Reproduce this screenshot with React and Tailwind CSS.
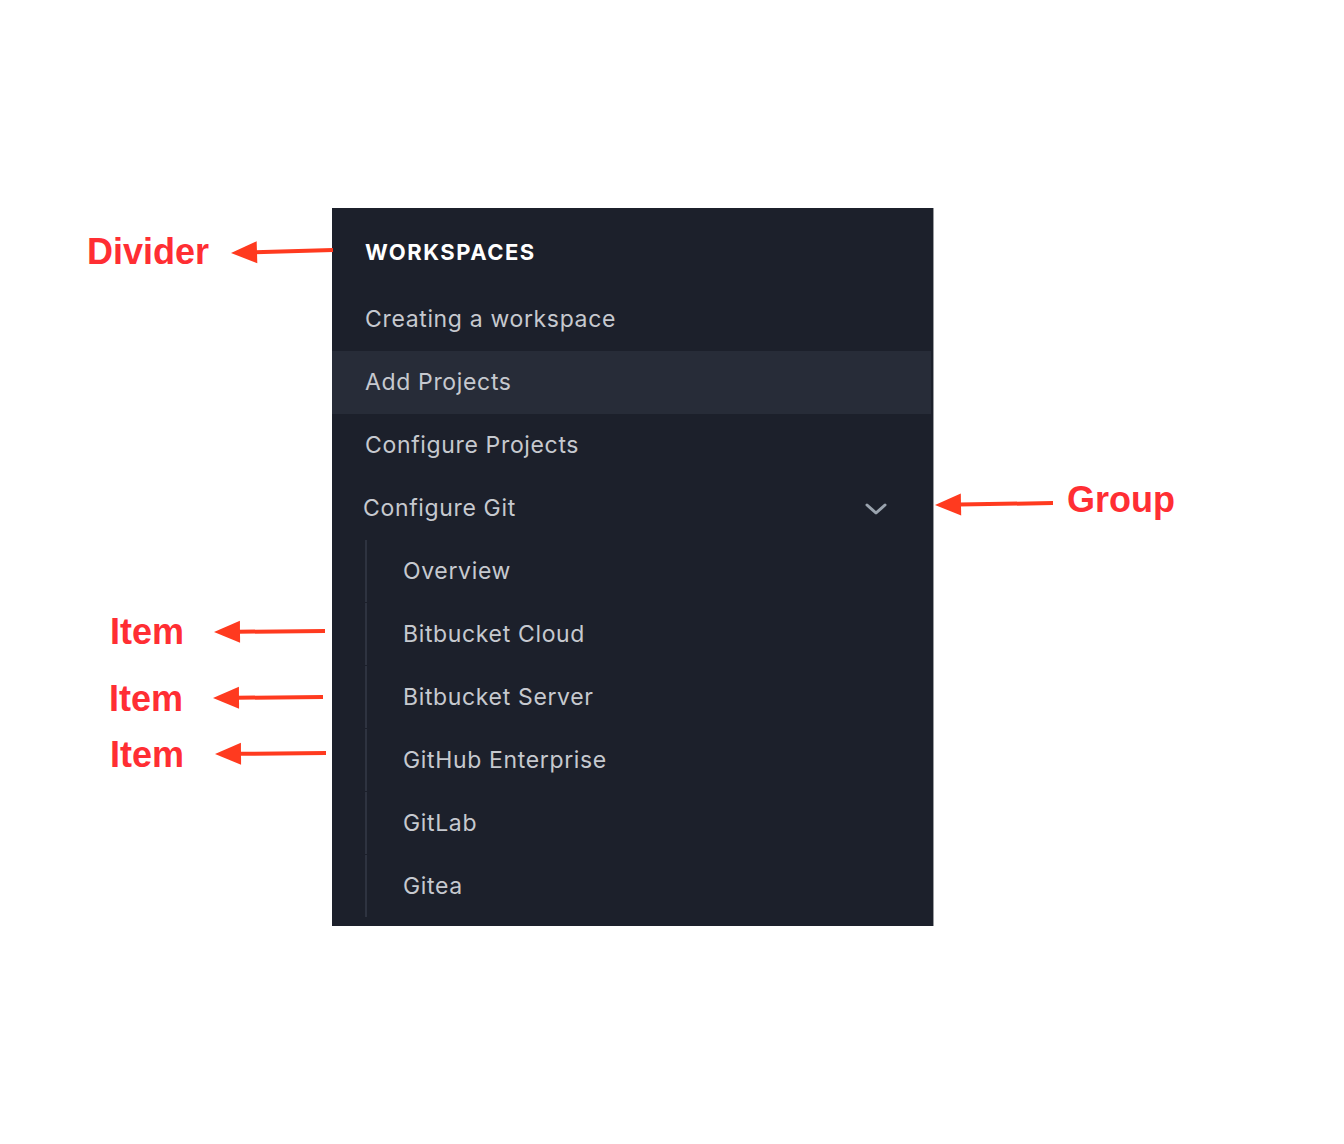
import React from "react";

const font = { fontFamily: "Inter, 'Noto Sans', sans-serif" };
const labelFont = { fontFamily: "'Liberation Sans', Arial, sans-serif" };

function Row({ children, active }) {
  return (
    <div
      className={`h-[63px] flex items-center pl-[33px] text-[23px] tracking-[0.65px] text-[#c6c9cf] ${
        active ? "bg-[#272c38] mr-[2px]" : ""
      }`}
    >
      {children}
    </div>
  );
}

function SubItem({ children }) {
  return (
    <div className="h-[63px] pl-[33px] flex">
      <div className="h-[62px] border-l-2 border-[#2e3340] flex items-center pl-[36px] text-[23px] tracking-[0.65px] text-[#c6c9cf]">
        {children}
      </div>
    </div>
  );
}

function Arrow({ x1, y1, x2, y2 }) {
  const dx = x2 - x1;
  const dy = y2 - y1;
  const len = Math.sqrt(dx * dx + dy * dy);
  const ux = dx / len;
  const uy = dy / len;
  const hl = 26;
  const hw = 11;
  const bx = x1 + ux * hl;
  const by = y1 + uy * hl;
  const px = -uy;
  const py = ux;
  return (
    <g>
      <line x1={bx - ux * 2} y1={by - uy * 2} x2={x2} y2={y2} stroke="#ff3a1f" strokeWidth="4" />
      <polygon
        points={`${x1},${y1} ${bx + px * hw},${by + py * hw} ${bx - px * hw},${by - py * hw}`}
        fill="#ff3a1f"
      />
    </g>
  );
}

function Label({ className, children }) {
  return (
    <div className={`absolute text-[36px] font-bold text-[#ff2e33] leading-none ${className}`} style={labelFont}>
      {children}
    </div>
  );
}

export default function App() {
  return (
    <div className="relative w-[1344px] h-[1144px] bg-white overflow-hidden" style={font}>
      <div className="pt-[208px] pl-[332px]">
        <div className="w-[602px] h-[718px] bg-[#1c202b] border-r border-[#9a9ca0] pt-[12px] flex flex-col">
          <div className="h-[68px] flex items-center pl-[33px] text-[22px] font-bold text-white tracking-[1.5px] pb-[4px]">
            WORKSPACES
          </div>
          <Row>Creating a workspace</Row>
          <Row active>Add Projects</Row>
          <Row>Configure Projects</Row>
          <div className="h-[63px] flex items-center justify-between pl-[31px] pr-[46px] text-[23px] tracking-[0.65px] text-[#c6c9cf]">
            <span>Configure Git</span>
            <svg width="22" height="14" viewBox="0 0 22 14" fill="none">
              <path d="M2 3 L11 11 L20 3" stroke="#9aa3ae" strokeWidth="3" strokeLinecap="round" strokeLinejoin="round" />
            </svg>
          </div>
          <SubItem>Overview</SubItem>
          <SubItem>Bitbucket Cloud</SubItem>
          <SubItem>Bitbucket Server</SubItem>
          <SubItem>GitHub Enterprise</SubItem>
          <SubItem>GitLab</SubItem>
          <SubItem>Gitea</SubItem>
        </div>
      </div>

      <Label className="left-[87px] top-[234px]">Divider</Label>
      <Label className="left-[1067px] top-[482px]">Group</Label>
      <Label className="left-[110px] top-[614px]">Item</Label>
      <Label className="left-[109px] top-[681px]">Item</Label>
      <Label className="left-[110px] top-[737px]">Item</Label>

      <svg className="absolute inset-0 pointer-events-none" width="1344" height="1144">
        <Arrow x1={231} y1={253} x2={333} y2={250} />
        <Arrow x1={935} y1={505} x2={1053} y2={503} />
        <Arrow x1={214} y1={632} x2={325} y2={631} />
        <Arrow x1={213} y1={698} x2={323} y2={697} />
        <Arrow x1={215} y1={754} x2={326} y2={753} />
      </svg>
    </div>
  );
}
